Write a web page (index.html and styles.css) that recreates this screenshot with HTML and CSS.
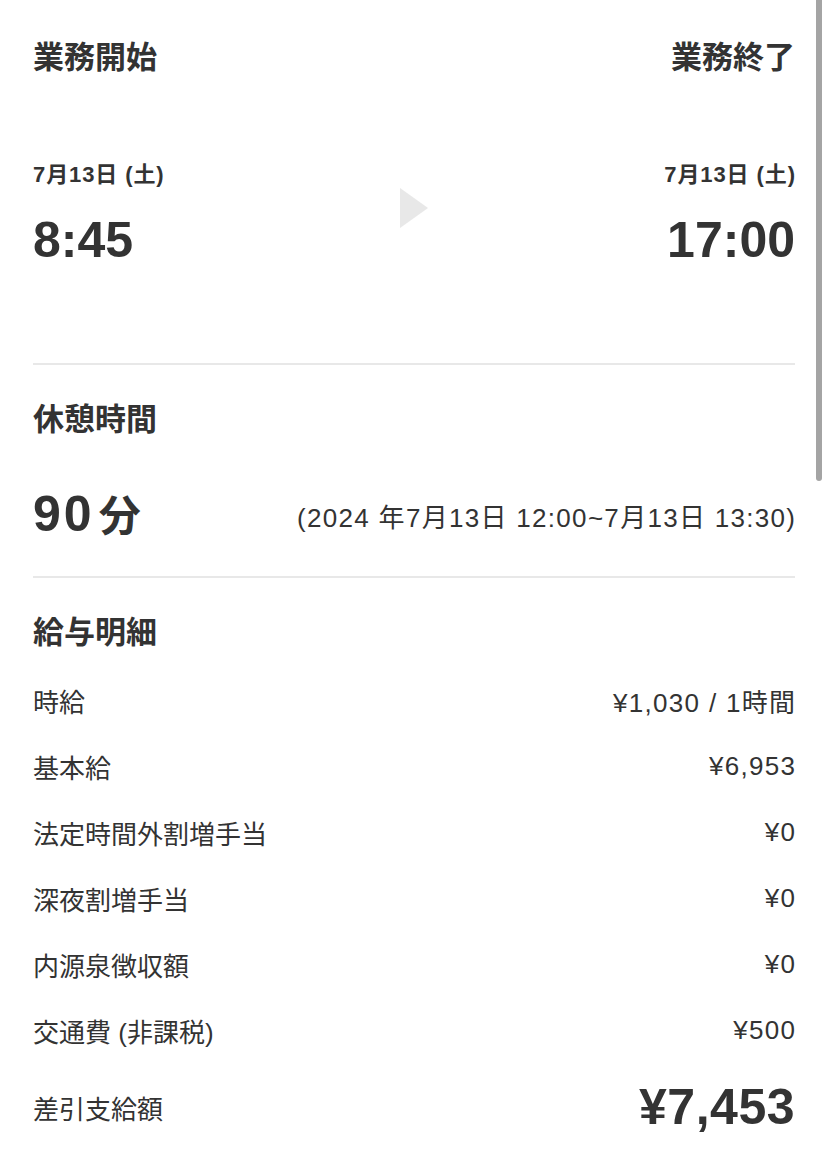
FILE: index.html
```html
<!DOCTYPE html>
<html lang="ja">
<head>
<meta charset="utf-8">
<title>勤務詳細</title>
<link rel="stylesheet" href="styles.css">
</head>
<body>
<main class="page">
  <section class="work">
    <div class="work-head">
      <h2 class="title">業務開始</h2>
      <h2 class="title">業務終了</h2>
    </div>
    <div class="work-times">
      <div class="time-col">
        <div class="date">7月13日 (土)</div>
        <div class="time">8:45</div>
      </div>
      <div class="arrow"></div>
      <div class="time-col end">
        <div class="date">7月13日 (土)</div>
        <div class="time">17:00</div>
      </div>
    </div>
  </section>
  <section class="rest">
    <h2 class="title">休憩時間</h2>
    <div class="rest-row">
      <div class="rest-min">90<span class="unit">分</span></div>
      <div class="rest-range">(2024 年7月13日 12:00~7月13日 13:30)</div>
    </div>
  </section>
  <section class="pay">
    <h2 class="title">給与明細</h2>
    <div class="row"><span>時給</span><span class="val">¥1,030 / 1時間</span></div>
    <div class="row"><span>基本給</span><span class="val">¥6,953</span></div>
    <div class="row"><span>法定時間外割増手当</span><span class="val">¥0</span></div>
    <div class="row"><span>深夜割増手当</span><span class="val">¥0</span></div>
    <div class="row"><span>内源泉徴収額</span><span class="val">¥0</span></div>
    <div class="row"><span>交通費 (非課税)</span><span class="val">¥500</span></div>
    <div class="row total"><span>差引支給額</span><span class="total-amount">¥7,453</span></div>
  </section>
</main>
<div class="scroll-indicator"></div>
</body>
</html>
```
FILE: styles.css
```css
html, body {
  margin: 0;
  padding: 0;
  background: #ffffff;
}
body {
  font-family: "Liberation Sans", "Noto Sans CJK JP", sans-serif;
  color: #333333;
  width: 828px;
  height: 1158px;
  overflow: hidden;
  position: relative;
}
.page {
  padding: 35px 33px 0 33px;
}
.title {
  margin: 0;
  font-size: 31px;
  line-height: 40px;
  font-weight: 700;
  font-family: "Noto Sans CJK JP", sans-serif;
  color: #333333;
}
.work {
  border-bottom: 2px solid #e8e8e8;
  padding-bottom: 95px;
}
.work-head {
  display: flex;
  justify-content: space-between;
}
.work-times {
  margin-top: 85px;
  display: grid;
  grid-template-columns: 1fr auto 1fr;
  align-items: start;
}
.time-col.end {
  text-align: right;
}
.date {
  font-size: 22px;
  line-height: 30px;
  font-weight: 700;
  letter-spacing: 0.9px;
}
.time-col.end .date {
  margin-right: -0.9px;
}
.time {
  margin-top: 22px;
  font-size: 50px;
  line-height: 56px;
  font-weight: 700;
}
.arrow {
  margin-top: 28px;
  width: 0;
  height: 0;
  border-top: 20px solid transparent;
  border-bottom: 20px solid transparent;
  border-left: 28px solid #e8e8e8;
}
.rest {
  padding-top: 32px;
  padding-bottom: 31px;
  border-bottom: 2px solid #e8e8e8;
}
.rest-row {
  margin-top: 48px;
  display: flex;
  justify-content: space-between;
  align-items: center;
  height: 60px;
}
.rest-min {
  font-size: 50px;
  font-weight: 700;
  line-height: 60px;
  letter-spacing: 3px;
}
.unit {
  margin-left: 4px;
  font-size: 42px;
  letter-spacing: 0;
}
.rest-range {
  font-size: 26px;
  letter-spacing: 1.3px;
  margin-right: -1.3px;
}
.pay {
  padding-top: 32px;
}
.pay .title {
  margin-bottom: 17px;
}
.row {
  display: flex;
  justify-content: space-between;
  align-items: center;
  height: 66px;
  font-size: 26px;
}
.val {
  letter-spacing: 1.3px;
  margin-right: -1.3px;
}
.row.total {
  height: 88px;
}
.total-amount {
  font-size: 50px;
  font-weight: 700;
  letter-spacing: 0.5px;
}
.scroll-indicator {
  position: absolute;
  top: 0;
  left: 816px;
  width: 6px;
  height: 481px;
  background: #a4a4a4;
  border-radius: 0 0 3px 3px;
}
```
